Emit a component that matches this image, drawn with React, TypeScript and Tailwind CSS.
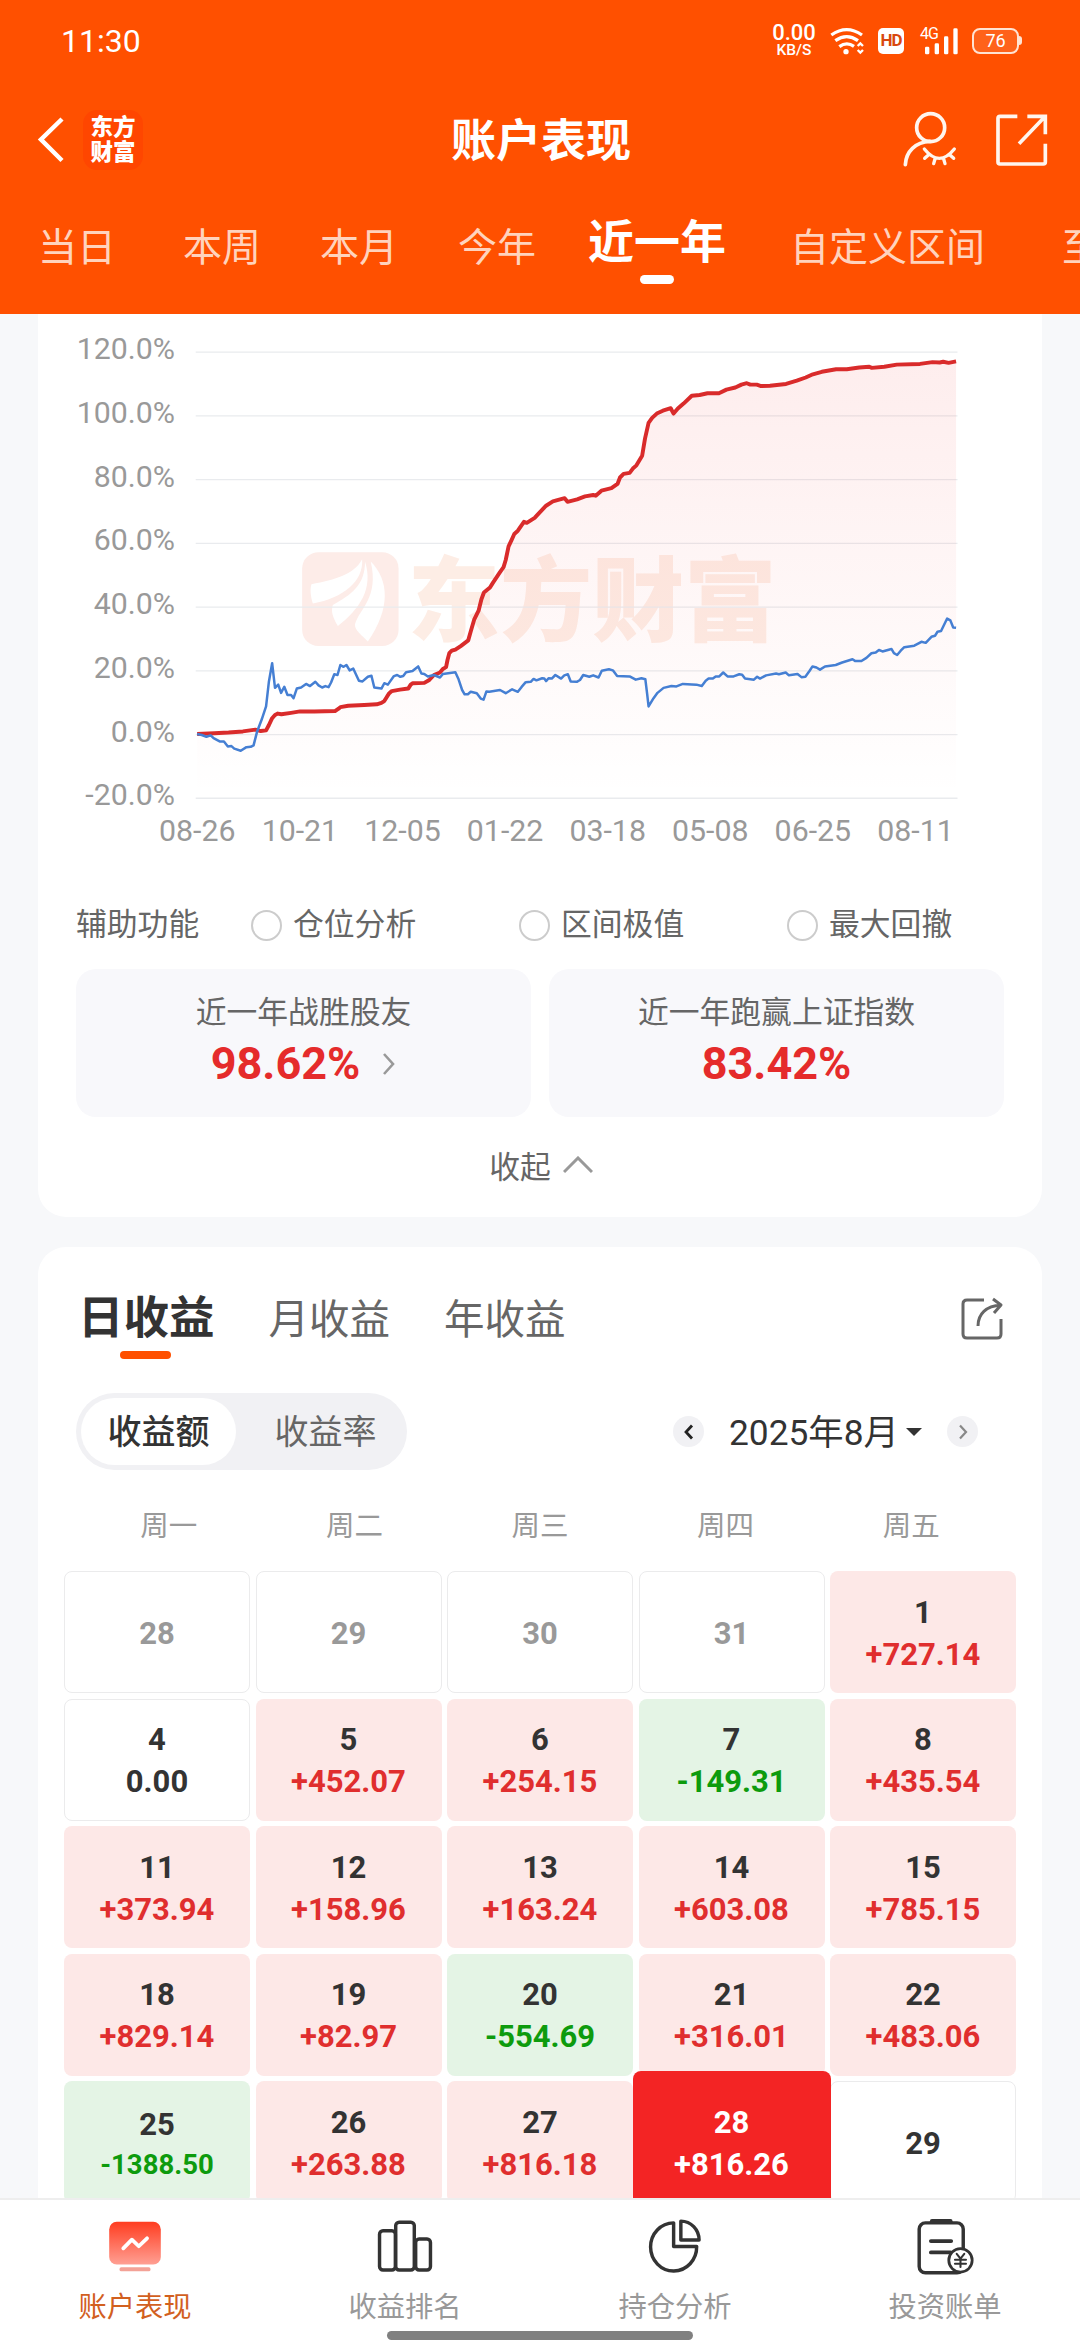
import { useState } from 'react';
import clsx from 'clsx';

const RANGES = [
  { label: '当日', className: 'w-[78px] ml-[38px]' },
  { label: '本周', className: 'w-[78px] ml-[67px]' },
  { label: '本月', className: 'w-[78px] ml-[59px]' },
  { label: '今年', className: 'w-[78px] ml-[60px]' },
  { label: '近一年', className: 'w-[138px] ml-[52px]' },
  { label: '自定义区间', className: 'w-[195px] ml-[64px]' },
  { label: '至今', className: 'w-[78px] ml-[77px]' },
];

const Y_LABELS = ['120.0%', '100.0%', '80.0%', '60.0%', '40.0%', '20.0%', '0.0%', '-20.0%'];
const X_LABELS = ['08-26', '10-21', '12-05', '01-22', '03-18', '05-08', '06-25', '08-11'];
const GRID_Y = [118, 296.5, 475, 653.5, 832, 1010.5, 1189, 1367];

const ACCOUNT_LINE =
  '552,1187 600,1185 640,1183 680,1180 715,1175 730,1179 745,1177 753,1162 762,1143 770,1134 778,1130 788,1132 815,1128 840,1124 880,1124 938,1123 947,1117 953,1112 975,1108 1020,1106 1055,1104 1068,1100 1076,1095 1084,1082 1090,1073 1097,1067 1120,1063 1143,1060 1150,1049 1156,1045 1188,1044 1202,1036 1215,1022 1232,1015 1240,1005 1249,1000 1253,980 1258,961 1265,954 1275,951 1290,941 1311,925 1318,900 1328,866 1340,842 1348,810 1355,791 1372,777 1380,764 1400,734 1410,720 1416,700 1424,662 1432,645 1440,627 1450,618 1467,593 1475,596 1497,582 1508,570 1529,548 1548,536 1581,527 1589,537 1616,530 1638,522 1661,518 1668,520 1684,506 1712,499 1729,487 1736,469 1746,459 1763,456 1772,444 1782,435 1798,408 1806,360 1816,316 1826,302 1839,290 1856,282 1878,275 1886,290 1898,276 1914,262 1937,240 1959,238 1981,233 2013,233 2034,223 2059,217 2076,209 2091,205 2101,209 2119,209 2131,213 2156,212 2201,207 2231,198 2256,189 2276,180 2301,173 2341,166 2371,166 2406,161 2434,159 2441,162 2476,159 2511,153 2576,151 2611,146 2631,147 2641,145 2656,148 2677,144';

const INDEX_LINE =
  '552,1187 565,1190 578,1195 590,1191 598,1199 615,1208 627,1208 638,1222 648,1221 656,1228 674,1234 690,1224 702,1223 710,1219 720,1180 733,1146 745,1110 753,1040 762,989 770,1058 779,1049 787,1072 796,1055 805,1078 815,1078 822,1087 831,1060 843,1057 857,1047 868,1053 883,1041 892,1051 902,1057 911,1053 920,1056 927,1043 936,1020 945,1022 953,994 962,999 970,994 979,1009 989,1004 1005,1038 1015,1040 1030,1027 1040,1024 1048,1057 1068,1060 1076,1045 1086,1049 1103,1025 1112,1022 1121,1027 1129,1025 1137,1014 1155,1011 1171,998 1180,1018 1188,1019 1198,1026 1215,1022 1232,1029 1240,1019 1275,1014 1284,1034 1294,1064 1301,1076 1310,1076 1318,1069 1335,1073 1346,1088 1354,1091 1362,1068 1370,1069 1400,1064 1416,1073 1434,1062 1450,1069 1460,1056 1472,1042 1486,1041 1494,1033 1502,1037 1518,1031 1524,1032 1529,1039 1536,1031 1545,1032 1555,1022 1571,1032 1580,1023 1590,1020 1598,1040 1615,1041 1624,1036 1633,1022 1650,1027 1661,1023 1676,1029 1685,1010 1705,1006 1716,1009 1728,1025 1763,1026 1780,1035 1796,1031 1807,1034 1812,1075 1816,1110 1830,1087 1841,1072 1858,1058 1880,1053 1894,1054 1912,1047 1950,1049 1965,1053 1976,1038 1984,1032 1996,1032 2004,1026 2014,1026 2025,1015 2037,1026 2054,1026 2070,1020 2078,1021 2086,1032 2111,1035 2120,1027 2128,1032 2145,1023 2173,1018 2181,1020 2200,1015 2209,1023 2233,1019 2244,1028 2255,1027 2267,1010 2275,998 2286,1001 2296,1007 2310,998 2340,994 2358,987 2387,978 2395,983 2412,983 2426,974 2440,961 2452,959 2461,952 2471,956 2496,949 2503,961 2512,966 2522,954 2532,944 2560,940 2580,929 2592,932 2608,915 2618,912 2625,901 2635,899 2652,864 2661,869 2669,889 2677,890';

type Day = { day: number; value?: string; muted?: boolean; selected?: boolean };

const DAYS: Day[] = [
  { day: 28, muted: true },
  { day: 29, muted: true },
  { day: 30, muted: true },
  { day: 31, muted: true },
  { day: 1, value: '+727.14' },
  { day: 4, value: '0.00' },
  { day: 5, value: '+452.07' },
  { day: 6, value: '+254.15' },
  { day: 7, value: '-149.31' },
  { day: 8, value: '+435.54' },
  { day: 11, value: '+373.94' },
  { day: 12, value: '+158.96' },
  { day: 13, value: '+163.24' },
  { day: 14, value: '+603.08' },
  { day: 15, value: '+785.15' },
  { day: 18, value: '+829.14' },
  { day: 19, value: '+82.97' },
  { day: 20, value: '-554.69' },
  { day: 21, value: '+316.01' },
  { day: 22, value: '+483.06' },
  { day: 25, value: '-1388.50' },
  { day: 26, value: '+263.88' },
  { day: 27, value: '+816.18' },
  { day: 28, value: '+816.26', selected: true },
  { day: 29 },
];

const StatusBar = () => (
  <div className="flex h-20 items-center justify-between pt-px pr-[58px] pl-[61px] text-white">
    <span className="text-[32px] leading-none">11:30</span>
    <div className="flex items-center">
      <div className="mr-[14px] flex w-[44px] flex-col items-center font-medium">
        <span className="text-[22px] leading-[18px]">0.00</span>
        <span className="text-[15.500px] leading-[16px]">KB/S</span>
      </div>
      {/* Wifi */}
      <svg className="mr-[13px] h-[28px] w-[35px]" viewBox="270 79 105 84" fill="none" stroke="#fff" strokeWidth="10">
        <path d="M274 103 Q320 71 366 103" />
        <path d="M286 120 Q320 96 354 120" />
        <path d="M298 138 Q320 122 342 137" />
        <circle cx="318" cy="153" r="8" fill="#fff" stroke="none" />
        <path d="M353 136l8-8 8 8M353 148l8 8 8-8" strokeWidth="7" />
      </svg>
      <div className="mr-4 flex h-[26px] w-[26px] items-center justify-center rounded-[5px] bg-white text-[17px] leading-none font-bold tracking-[-1px] text-[#d9480f]">
        HD
      </div>
      {/* Signal */}
      <div className="relative mr-[14px] h-[28px] w-[38px]">
        <span className="absolute top-0 left-0 text-[16px] leading-[14px] tracking-[-1px]">4G</span>
        <svg className="h-[28px] w-[38px]" viewBox="536 79 114 84" fill="#fff">
          <rect x="551" y="138" width="13" height="23" rx="4" />
          <rect x="580" y="128" width="13" height="33" rx="4" />
          <rect x="608" y="107" width="13" height="54" rx="4" />
          <rect x="636" y="83" width="13" height="78" rx="4" />
        </svg>
      </div>
      <div className="flex items-center">
        <div className="flex h-[26px] w-[47px] items-center justify-center rounded-[8px] border-2 border-[#ffe3d3] bg-white/10 text-[18px] leading-none">76</div>
        <div className="h-[9px] w-[3px] rounded-r bg-[#ffe3d3]" />
      </div>
    </div>
  </div>
);

const Header = () => {
  const [range, setRange] = useState('近一年');
  return (
    <header className="h-[314px] shrink-0 overflow-hidden bg-[#ff5000]">
      <StatusBar />
      <div className="grid h-[120px] grid-cols-3 items-center text-white">
        <div className="flex items-center pl-[37px]">
          <svg className="h-[46px] w-[27px]" viewBox="0 0 27 46" fill="none" stroke="#fff" strokeWidth="4.5">
            <path d="M25 2L4 22.500L25 43.500" />
          </svg>
          <div className="ml-[19px] flex h-[60px] w-[60px] flex-col items-center justify-center rounded-[14px] bg-[#ff4600] text-[22.500px] leading-[25px] font-black">
            <span>东方</span>
            <span>财富</span>
          </div>
        </div>
        <h1 className="pt-[2px] pl-[2px] text-center text-[45px] leading-none font-bold">账户表现</h1>
        <div className="flex items-center justify-end pr-8">
          <svg className="mr-[38px] h-[58px] w-[56px]" viewBox="480 330 168 174" fill="none" stroke="#fff5ee" strokeWidth="11" strokeLinecap="round">
            <circle cx="566" cy="380" r="42" />
            <path d="M490 491C492 452 520 423 564 421" />
            <path d="M547 444Q592 500 637 444M560 461l-12 11M579 474l-4 14M605 474l4 14M623 461l12 11" strokeWidth="10" />
          </svg>
          <svg className="h-[52px] w-[52px]" viewBox="767 337 156 156" fill="none" stroke="#fff5ee" strokeWidth="11">
            <path d="M831 344H779Q773 344 773 350V481Q773 487 779 487H909Q915 487 915 481V426" />
            <path d="M861 344H915V398M912 347L836 426" />
          </svg>
        </div>
      </div>
      <nav className="flex h-[94px] w-[1240px] items-center">
        {RANGES.map(({ label, className }) => (
          <button
            key={label}
            onClick={() => setRange(label)}
            className={clsx(
              'relative shrink-0 text-left leading-[60px] whitespace-nowrap',
              className,
              range === label ? '-mt-[11px] text-[46px] font-bold text-white' : 'pt-[2px] text-[39px] text-[#ffd3bd]',
            )}
          >
            {label}
            {range === label && <span className="absolute -bottom-[12px] left-[52px] h-[9px] w-[34px] rounded-full bg-white" />}
          </button>
        ))}
      </nav>
    </header>
  );
};

const PerformanceChart = () => (
  <div>
    <div className="flex pt-[4px]">
      <div className="flex w-[137px] flex-col pt-px text-right text-[30.300px] text-[#999]">
        {Y_LABELS.map((label) => (
          <span key={label} className="h-[63.75px] leading-[60px]">{label}</span>
        ))}
      </div>
      <div className="relative ml-[15px] h-[490px] w-[770px]">
        <svg className="absolute top-[22px] h-[470px] w-[770px]" viewBox="532 84 2156 1316">
          <defs>
            <linearGradient id="area" gradientUnits="userSpaceOnUse" x1="0" y1="140" x2="0" y2="1367">
              <stop offset="0" stopColor="#f02020" stopOpacity="0.08" />
              <stop offset="1" stopColor="#f02020" stopOpacity="0" />
            </linearGradient>
          </defs>
          {/* Watermark */}
          <rect x="846" y="678" width="270" height="263" rx="46" fill="#fdece8" />
          <path d="M872 768C940 754 990 742 1014 698C1018 760 962 806 876 822C869 800 868 780 872 768Z" fill="#fff" />
          <path d="M1022 704C1046 780 1008 836 946 885C932 860 926 846 932 826C985 796 1022 770 1022 704Z" fill="#fff" />
          <path d="M1038 704C1090 756 1094 836 1030 928C1014 912 992 896 994 880C1006 836 1062 806 1038 704Z" fill="#fff" />
          <text x="1142" y="908" fontSize="258" fontWeight="900" fill="#fdede5">东方财富</text>
          {GRID_Y.map((y) => (
            <line key={y} x1="548" x2="2681" y1={y} y2={y} stroke="#e9ebee" strokeWidth="4" />
          ))}
          <polygon points={`552,1367 ${ACCOUNT_LINE} 2677,1367`} fill="url(#area)" />
          <polyline points={ACCOUNT_LINE} fill="none" stroke="#d92b2b" strokeWidth="11" strokeLinejoin="round" />
          <polyline points={INDEX_LINE} fill="none" stroke="#457fd3" strokeWidth="7" strokeLinejoin="round" />
        </svg>
      </div>
    </div>
    <div className="-mt-[18px] ml-[108px] flex text-center text-[30.300px] leading-[40px] text-[#999]">
      {X_LABELS.map((label) => (
        <span key={label} className="w-[102.600px]">{label}</span>
      ))}
    </div>
  </div>
);

const PerformanceCard = () => (
  <section className="mx-[38px] h-[903px] shrink-0 rounded-b-[28px] bg-white">
    <div className="h-[537px]">
      <PerformanceChart />
    </div>
    {/* Chart helpers */}
    <div className="mt-[49px] flex h-[50px] items-center pl-[38px] text-[30.800px] text-[#666]">
      <span className="w-[175px] shrink-0">辅助功能</span>
      {['仓位分析', '区间极值', '最大回撤'].map((label) => (
        <label key={label} className="flex w-[268px] shrink-0 items-center gap-[11px]">
          <span className="h-[31px] w-[31px] rounded-full border-[2.500px] border-[#ccc]" />
          {label}
        </label>
      ))}
    </div>
    <div className="mt-[19px] flex gap-[18px] px-[38px]">
      <div className="flex h-[148px] flex-1 flex-col items-center rounded-[20px] bg-[#f8f8fb] pt-[24px]">
        <span className="text-[30.800px] leading-10 text-[#666]">近一年战胜股友</span>
        <div className="mt-[7px] flex items-center">
          <span className="text-[45px] leading-[48px] font-bold text-[#e52b2b]">98.62%</span>
          <svg className="ml-[22px] h-[24px] w-[14px]" viewBox="0 0 14 24" fill="none" stroke="#999" strokeWidth="2.6">
            <path d="M2 2l9 10-9 10" />
          </svg>
        </div>
      </div>
      <div className="flex h-[148px] flex-1 flex-col items-center rounded-[20px] bg-[#f8f8fb] pt-[24px]">
        <span className="text-[30.800px] leading-10 text-[#666]">近一年跑赢上证指数</span>
        <span className="mt-[7px] text-[45px] leading-[48px] font-bold text-[#e52b2b]">83.42%</span>
      </div>
    </div>
    <button className="mx-auto mt-[27px] flex h-[48px] items-center pl-[2px] text-[30.800px] text-[#666]">
      收起
      <svg className="mb-[6px] ml-[12px] h-[18px] w-[30px]" viewBox="0 0 30 18" fill="none" stroke="#999" strokeWidth="3">
        <path d="M1 16L15 2l14 14" />
      </svg>
    </button>
  </section>
);

const DayCell = ({ day, value, muted, selected }: Day) => {
  const up = value?.startsWith('+');
  const down = value?.startsWith('-');
  const long = !!value && value.length > 7;
  return (
    <div
      className={clsx(
        'flex flex-col items-center justify-center rounded-[8px] pt-[3px] text-[31px] leading-[42px] font-bold text-[#333]',
        selected && 'relative z-10 -mx-[6px] -mt-[10px] -mb-[10px] bg-[#f32424] text-white',
        !selected && up && 'bg-[#fde8e7]',
        !selected && down && 'bg-[#e4f4e5]',
        !up && !down && 'border border-[#ebebec]',
        muted && 'text-[#999]',
      )}
    >
      <span>{day}</span>
      {value && (
        <span
          className={clsx(
            long && 'text-[27.500px] leading-[38px]',
            !selected && up && 'text-[#e02e2e]',
            !selected && down && 'text-[#0d9b0d]',
          )}
        >
          {value}
        </span>
      )}
    </div>
  );
};

const CalendarCard = () => {
  const [mode, setMode] = useState('收益额');
  return (
    <section className="mx-[38px] mt-[30px] flex-1 shrink-0 rounded-t-[28px] bg-white">
      <div className="flex h-[144px] items-center pr-[38px] pl-[40px] text-[40.500px] text-[#666]">
        <div className="relative text-[45.500px] leading-[60px] font-bold text-[#333]">
          日收益
          <span className="absolute -bottom-[10px] left-[42px] h-2 w-[51px] rounded-full bg-[#ff5000]" />
        </div>
        <span className="ml-[54px] pt-[2px]">月收益</span>
        <span className="ml-[54px] pt-[2px]">年收益</span>
        <svg className="ml-auto h-[44px] w-[44px]" viewBox="0 0 44 44" fill="none" stroke="#666" strokeWidth="3" strokeLinejoin="round">
          <path d="M24 3H7Q3 3 3 7V37Q3 41 7 41H37Q41 41 41 37V22" />
          <path d="M18 29C18 17 26 9 41 8M33 2l8 6-7 8" />
        </svg>
      </div>

      <div className="mt-[2px] flex h-[77px] items-center pr-[64px] pl-[38px]">
        <div className="flex h-[77px] w-[331px] items-center rounded-full bg-[#f1f1f4] pl-[5px] text-[34px]">
          {['收益额', '收益率'].map((item) => (
            <button
              key={item}
              onClick={() => setMode(item)}
              className={clsx(
                'h-[67px] shrink-0 rounded-full pt-[2px]',
                mode === item ? 'w-[155px] bg-white font-medium text-[#333]' : 'w-[171px] pl-2 text-[#666]',
              )}
            >
              {item}
            </button>
          ))}
        </div>
        <div className="ml-auto flex items-center">
          <button className="flex h-[31px] w-[31px] items-center justify-center rounded-full bg-[#f1f1f4]">
            <svg className="h-4 w-[10px]" viewBox="0 0 10 16" fill="none" stroke="#222" strokeWidth="2.8"><path d="M8 1.500L2 8l6 6.500" /></svg>
          </button>
          <span className="ml-[25px] w-[177px] pt-[3px] text-[35.300px] whitespace-nowrap text-[#333]">2025年8月</span>
          <svg className="h-2 w-4" viewBox="0 0 16 8" fill="#333"><path d="M0 0h16L8 8z" /></svg>
          <button className="ml-[25px] flex h-[31px] w-[31px] items-center justify-center rounded-full bg-[#f1f1f4]">
            <svg className="h-4 w-[10px]" viewBox="0 0 10 16" fill="none" stroke="#888" strokeWidth="2.200"><path d="M2 1.500L8 8l-6 6.500" /></svg>
          </button>
        </div>
      </div>

      <div className="mt-[36px] grid h-[42px] grid-cols-5 px-[38px] text-center text-[28.500px] leading-[42px] text-[#999]">
        {['周一', '周二', '周三', '周四', '周五'].map((d) => (
          <span key={d}>{d}</span>
        ))}
      </div>
      <div className="mx-[26px] mt-[23px] grid auto-rows-[122px] grid-cols-5 gap-x-[5.500px] gap-y-[5.600px]">
        {DAYS.map((d, i) => (
          <DayCell key={i} {...d} />
        ))}
      </div>
    </section>
  );
};

const TabBar = () => (
  <footer className="relative z-20 grid h-[142px] shrink-0 grid-cols-4 border-t-2 border-[#eee] bg-white text-[28.300px] text-[#999]">
    <div className="flex flex-col items-center pt-[17px] text-[#d2601f]">
      <svg className="h-[58.500px] w-[58px]" viewBox="308 48 168 170" fill="none">
        <defs>
          <linearGradient id="screen" x1="0" y1="0" x2="0" y2="1">
            <stop offset="0" stopColor="#ff3d20" />
            <stop offset="1" stopColor="#ff9f93" />
          </linearGradient>
        </defs>
        <rect x="317" y="62" width="150" height="124" rx="22" fill="url(#screen)" />
        <rect x="347" y="194" width="90" height="12" rx="5" fill="#f3a297" />
        <path d="M358 139L383 114L403 133L427 110" stroke="#fff" strokeWidth="11" strokeLinecap="round" strokeLinejoin="round" />
      </svg>
      <span className="mt-[12px] leading-[40px]">账户表现</span>
    </div>
    <div className="flex flex-col items-center pt-[17px]">
      <svg className="h-[58.500px] w-[58px]" viewBox="1092 48 168 170" fill="none" stroke="#333" strokeWidth="10">
        <rect x="1102" y="88" width="46" height="114" rx="10" />
        <rect x="1149" y="63" width="54" height="139" rx="10" />
        <rect x="1207" y="112" width="43" height="90" rx="10" />
      </svg>
      <span className="mt-[12px] leading-[40px]">收益排名</span>
    </div>
    <div className="flex flex-col items-center pt-[17px]">
      <svg className="h-[58.500px] w-[58px]" viewBox="308 48 168 170" fill="none" stroke="#333" strokeWidth="10" strokeLinejoin="round">
        <path d="M388 65V134H455A67 70 0 1 1 388 65Z" />
        <path d="M409 60V115H462A53 55 0 0 0 409 60Z" />
      </svg>
      <span className="mt-[12px] leading-[40px]">持仓分析</span>
    </div>
    <div className="flex flex-col items-center pt-[17px]">
      <svg className="h-[58.500px] w-[58px]" viewBox="1092 48 168 170" fill="none" stroke="#333" strokeWidth="10" strokeLinecap="round">
        <rect x="1101" y="65" width="128" height="145" rx="18" />
        <path d="M1138 60H1192" strokeWidth="12" />
        <path d="M1135 118H1194M1135 151H1192" strokeWidth="11" />
        <circle cx="1221" cy="174" r="34" fill="#fff" strokeWidth="8" />
        <path d="M1210 155l11 14 11-14M1221 169v24M1205 172h32M1205 184h32" strokeWidth="6" />
      </svg>
      <span className="mt-[12px] leading-[40px]">投资账单</span>
    </div>
    <div className="absolute bottom-0 left-1/2 h-[9px] w-[306px] -translate-x-1/2 rounded-full bg-[#808080]" />
  </footer>
);

const App = () => (
  <div className="flex h-[2340px] w-[1080px] flex-col overflow-hidden bg-[#f7f8fa] font-[Roboto,'Noto_Sans_CJK_SC',sans-serif]">
    <Header />
    <main className="flex min-h-0 flex-1 flex-col overflow-hidden">
      <PerformanceCard />
      <CalendarCard />
    </main>
    <TabBar />
  </div>
);

export default App;
